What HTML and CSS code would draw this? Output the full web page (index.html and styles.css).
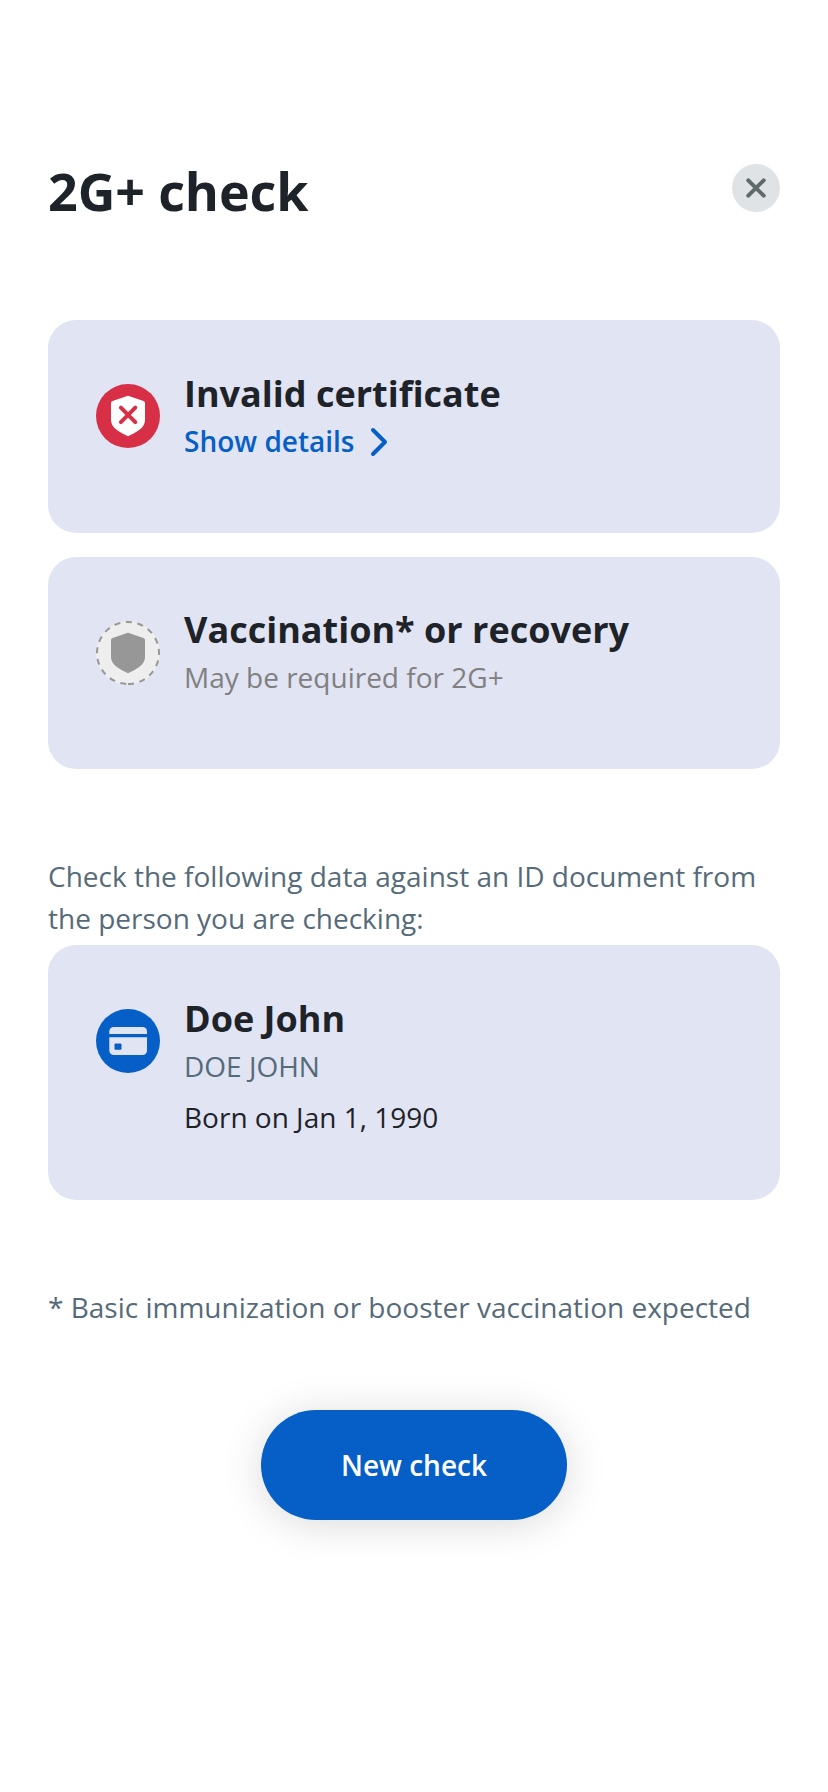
FILE: index.html
```html
<!DOCTYPE html>
<html lang="en">
<head>
<meta charset="utf-8">
<title>2G+ check</title>
<link rel="stylesheet" href="styles.css">
</head>
<body>
<main class="screen">
  <header class="header">
    <h1 class="title">2G+ check</h1>
    <button class="close" aria-label="Close"><svg width="48" height="48" viewBox="0 0 48 48"><circle cx="24" cy="24" r="24" fill="#dfe3e6"/><path d="M16.300 16.300l15.400 15.400M31.700 16.300L16.300 31.700" stroke="#5f6b6b" stroke-width="4" stroke-linecap="round"/></svg></button>
  </header>
  <section class="card first">
    <svg class="icon" viewBox="0 0 64 64"><circle cx="32" cy="32" r="32" fill="#d72f45"/><path d="M32 11.700L47.500 17Q49 17.600 49 19V36C49 44 40 48.500 32 52.200C24 48.500 15 44 15 36V19Q15 17.600 16.500 17Z" fill="#fff"/><path d="M24.900 23.700l14.400 14.400M39.300 23.700L24.900 38.100" stroke="#d72f45" stroke-width="4" stroke-linecap="round"/></svg>
    <div class="body">
      <h2 class="name">Invalid certificate</h2>
      <a class="link">Show details<svg class="chevron" width="20" height="30" viewBox="0 0 20 30"><path d="M4 3l12 12L4 27" fill="none" stroke="#065fc6" stroke-width="4" stroke-linecap="round" stroke-linejoin="round"/></svg></a>
    </div>
  </section>
  <section class="card second">
    <svg class="icon" viewBox="0 0 64 64"><circle cx="32" cy="32" r="32" fill="#eee"/><path d="M32 63A31 31 0 0 0 32 1A31 31 0 0 0 32 63" fill="none" stroke="#979797" stroke-width="2" stroke-dasharray="6 5.670"/><path d="M32 11.700L47.500 17Q49 17.600 49 19V36C49 44 40 48.500 32 52.200C24 48.500 15 44 15 36V19Q15 17.600 16.500 17Z" fill="#979797"/></svg>
    <div class="body">
      <h2 class="name">Vaccination* or recovery</h2>
      <p class="sub muted">May be required for 2G+</p>
    </div>
  </section>
  <p class="note intro">Check the following data against an ID document from the person you are checking:</p>
  <section class="card person">
    <svg class="icon" viewBox="0 0 64 64"><circle cx="32" cy="32" r="32" fill="#065fc6"/><rect x="13.300" y="18" width="37.700" height="28" rx="4.500" fill="#e1e4f3"/><path d="M13 26.600h38.500" stroke="#065fc6" stroke-width="3.300"/><rect x="18.500" y="34.400" width="7" height="6.300" rx="1" fill="#065fc6"/></svg>
    <div class="body">
      <h2 class="name">Doe John</h2>
      <p class="sub">DOE JOHN</p>
      <p class="born">Born on Jan 1, 1990</p>
    </div>
  </section>
  <p class="note foot">* Basic immunization or booster vaccination expected</p>
  <button class="action">New check</button>
</main>
</body>
</html>
```
FILE: styles.css
```css
* { box-sizing: border-box; margin: 0; }
body { background: #fff; font-family: "Open Sans", sans-serif; color: #1d2328; }
.screen { display: flex; flex-direction: column; padding: 155px 48px 0; height: 1792px; }
.header { display: flex; justify-content: space-between; align-items: flex-start; height: 165px; flex: none; }
.title { font-size: 52px; line-height: 72px; font-weight: 700; letter-spacing: -0.1px; }
.close { border: 0; padding: 0; background: none; height: 48px; margin-top: 9px; }
.close svg { display: block; }
.card { display: flex; flex: none; gap: 24px; height: 212px; padding: 48px; border-radius: 28px; background: #e1e4f3; }
.first { height: 213px; margin-bottom: 24px; }
.second { padding-top: 47px; }
.second .icon { margin-top: 17px; }
.icon { width: 64px; height: 64px; margin-top: 16px; flex: none; }
.name { font-size: 36px; line-height: 52px; font-weight: 700; }
.link { display: flex; align-items: center; gap: 14.5px; color: #065fc6; font-size: 28px; line-height: 42px; font-weight: 600; }
.chevron { margin-top: 2px; }
.sub { color: #566b7a; font-size: 28px; line-height: 42px; }
.muted { color: #808080; }
.note { color: #566b7a; font-size: 28px; line-height: 42px; white-space: nowrap; }
.intro { white-space: normal; margin: 86px 0 6px; }
.person { height: 255px; margin-bottom: 86px; }
.person .icon { margin-top: 16px; }
.person { padding-top: 48px; }
.born { font-size: 28px; line-height: 42px; margin-top: 9px; }
.action { align-self: center; flex: none; width: 306px; height: 110px; margin-top: 82px; border: 0; border-radius: 55px; background: #065fc6; color: #fff; font: 600 28px "Open Sans", sans-serif; box-shadow: 0 4px 40px rgba(0,0,0,.15); }
```
